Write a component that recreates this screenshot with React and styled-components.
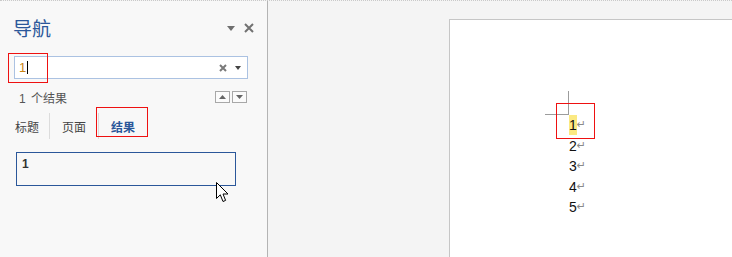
import React from 'react'
import styled, { createGlobalStyle } from 'styled-components'

const GlobalStyle = createGlobalStyle`
    html, body {
        margin: 0;
        padding: 0;
        background: #f4f4f4;
        font-family: "Noto Sans CJK SC", "Liberation Sans", sans-serif;
    }
`

const lines = ['1', '2', '3', '4', '5']

function App() {
    return (
        <>
        <GlobalStyle />
        <Screen>
            <NavPane>
                <Header>
                    <Title>导航</Title>
                    <HeaderTools>
                        <svg width="8" height="5" viewBox="0 0 8 5">
                            <path d="M0 0 H8 L4 5 Z" fill="#6f6f6f" />
                        </svg>
                        <svg width="10" height="10" viewBox="0 0 10 10">
                            <path d="M1 1 L9 9 M9 1 L1 9" stroke="#727272" strokeWidth="2" />
                        </svg>
                    </HeaderTools>
                </Header>

                <SearchBox>
                    <SearchText>1</SearchText>
                    <Caret />
                    <SearchTools>
                        <svg width="8" height="8" viewBox="0 0 8 8">
                            <path d="M1 1 L7 7 M7 1 L1 7" stroke="#7a7a7a" strokeWidth="2" />
                        </svg>
                        <svg width="6" height="4" viewBox="0 0 6 4">
                            <path d="M0 0 H6 L3 4 Z" fill="#444" />
                        </svg>
                    </SearchTools>
                </SearchBox>

                <CountRow>
                    <span>1 个结果</span>
                    <StepButtons>
                        <StepButton>
                            <svg width="7" height="4" viewBox="0 0 7 4"><path d="M0 4 H7 L3.5 0 Z" fill="#666" /></svg>
                        </StepButton>
                        <StepButton>
                            <svg width="7" height="4" viewBox="0 0 7 4"><path d="M0 0 H7 L3.5 4 Z" fill="#666" /></svg>
                        </StepButton>
                    </StepButtons>
                </CountRow>

                <Tabs>
                    <Tab $first>标题</Tab>
                    <Tab>页面</Tab>
                    <Tab $active>结果</Tab>
                </Tabs>

                <ResultCard>1</ResultCard>

                <RedMark style={{ left: 8, top: 52, width: 38, height: 28 }} />
                <RedMark style={{ left: 96, top: 106, width: 50, height: 28 }} />
                <Pointer width="13" height="21" viewBox="0 0 13 21">
                    <path d="M0.5 0.5 V16.5 L4.3 12.8 L7 19.5 L9.6 18.4 L7 12 H12 Z" fill="#fff" stroke="#000" strokeWidth="1" strokeLinejoin="miter" />
                </Pointer>
            </NavPane>

            <Canvas>
                <Page>
                    <Lines>
                        {lines.map((n, i) => (
                            <Line key={n}>
                                <Digit $hit={i === 0}>{n}</Digit>
                                <Return>↵</Return>
                            </Line>
                        ))}
                    </Lines>
                    <CropV />
                    <CropH />
                    <RedMark style={{ left: 106, top: 83, width: 37, height: 34 }} />
                </Page>
            </Canvas>
        </Screen>
        </>
    )
}

const Screen = styled.div`
    display: flex;
    height: 256px;
    width: 732px;
    border-top: 1px dotted #c9c9c9;
    overflow: hidden;
`

const NavPane = styled.aside`
    position: relative;
    width: 267px;
    flex-shrink: 0;
    background: #f8f8f8;
    border-right: 1px solid #b4b4b4;
    padding-top: 13px;
    box-sizing: content-box;
`

const Header = styled.div`
    display: flex;
    align-items: center;
    justify-content: space-between;
    height: 28px;
    padding: 0 13px 0 13px;
`

const Title = styled.h1`
    margin: 0;
    font-size: 19px;
    font-weight: 400;
    line-height: 28px;
    color: #2b579a;
`

const HeaderTools = styled.div`
    display: flex;
    align-items: center;
    gap: 9px;
`

const SearchBox = styled.div`
    display: flex;
    align-items: center;
    height: 21px;
    margin: 14px 19px 0 14px;
    padding: 0 6px 0 4px;
    background: #fff;
    border: 1px solid #abc2e2;
`

const SearchText = styled.span`
    font-family: "Liberation Sans", sans-serif;
    font-size: 13px;
    color: #c98414;
`

const Caret = styled.span`
    display: inline-block;
    width: 1px;
    height: 13px;
    margin-left: 1px;
    background: #000;
`

const SearchTools = styled.div`
    margin-left: auto;
    display: flex;
    align-items: center;
    gap: 8px;
`

const CountRow = styled.div`
    display: flex;
    align-items: center;
    justify-content: space-between;
    height: 22px;
    margin-top: 7px;
    padding: 0 20px 0 19px;
    font-family: "Liberation Sans", "Noto Sans CJK SC", sans-serif;
    font-size: 12px;
    word-spacing: 2px;
    color: #555;
`

const StepButtons = styled.div`
    display: flex;
    gap: 2px;
`

const StepButton = styled.span`
    display: flex;
    align-items: center;
    justify-content: center;
    width: 13px;
    height: 10px;
    border: 1px solid #a8a8a8;
    background: #fbfbfb;
`

const Tabs = styled.div`
    display: flex;
    height: 26px;
    margin-top: 5px;
`

const Tab = styled.span`
    display: flex;
    align-items: center;
    padding: 0 12px 0 ${p => (p.$first ? '15px' : '12px')};
    font-size: 12px;
    color: ${p => (p.$active ? '#2b579a' : '#444')};
    font-weight: ${p => (p.$active ? 700 : 400)};
    border-right: ${p => (p.$active ? 'none' : '1px solid #dcdcdc')};
    &:first-child { padding-right: 10px; }
`

const ResultCard = styled.div`
    width: 206px;
    height: 26px;
    margin: 13px 0 0 16px;
    padding: 3px 7px 3px 5px;
    border: 1px solid #2b579a;
    font-family: "Liberation Sans", sans-serif;
    font-size: 12px;
    font-weight: 700;
    line-height: 16px;
    color: #333;
`

const RedMark = styled.div`
    position: absolute;
    border: 1px solid #ee1111;
    pointer-events: none;
`

const Pointer = styled.svg`
    position: absolute;
    left: 216px;
    top: 181px;
`

const Canvas = styled.main`
    flex: 1;
    display: flex;
    padding: 18px 0 0 181px;
    background: #f4f4f4;
`

const Page = styled.section`
    position: relative;
    flex: 1;
    background: #fff;
    border-top: 1px solid #c6c6c6;
    border-left: 1px solid #c6c6c6;
`

const Lines = styled.div`
    padding: 95px 0 0 119px;
    font-family: "Liberation Sans", sans-serif;
    font-size: 14px;
    line-height: 20.5px;
    color: #111;
`

const Line = styled.div`
    display: flex;
    align-items: center;
    height: 20.5px;
`

const Digit = styled.span`
    display: inline-block;
    height: 20px;
    line-height: 20px;
    background: ${p => (p.$hit ? '#fbe982' : 'transparent')};
`

const Return = styled.span`
    font-family: "DejaVu Sans", sans-serif;
    font-size: 11px;
    color: #8a8a8a;
`

const CropV = styled.div`
    position: absolute;
    left: 118px;
    top: 71px;
    width: 1px;
    height: 24px;
    background: #9c9c9c;
`

const CropH = styled.div`
    position: absolute;
    left: 95px;
    top: 94px;
    width: 24px;
    height: 1px;
    background: #9c9c9c;
`

export default App
